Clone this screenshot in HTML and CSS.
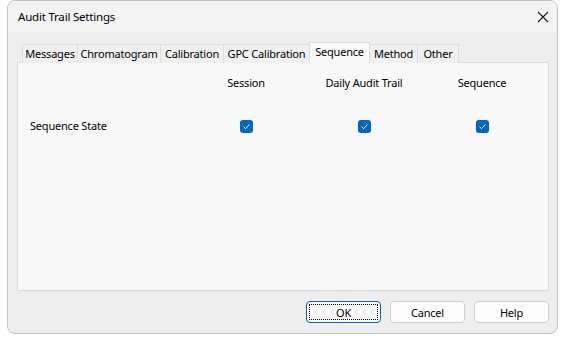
FILE: index.html
```html
<!DOCTYPE html>
<html>
<head>
<meta charset="utf-8">
<link rel="stylesheet" href="styles.css">
</head>
<body>
<div class="window">
  <div class="titlebar">
    <span class="title">Audit Trail Settings</span>
    <svg class="close" width="12" height="12" viewBox="0 0 12 12"><path d="M1 1 L11 11 M11 1 L1 11" stroke="#1a1a1a" stroke-width="1.1" fill="none"/></svg>
  </div>
  <div class="content">
    <div class="tabs">
      <div class="tab w-messages">Messages</div>
      <div class="tab w-chrom">Chromatogram</div>
      <div class="tab w-cal">Calibration</div>
      <div class="tab w-gpc">GPC Calibration</div>
      <div class="tab active w-seq">Sequence</div>
      <div class="tab w-method">Method</div>
      <div class="tab w-other">Other</div>
    </div>
    <div class="panel">
      <div class="grid">
        <div></div>
        <div class="head">Session</div>
        <div class="head">Daily Audit Trail</div>
        <div class="head">Sequence</div>
        <div class="label">Sequence State</div>
        <div class="cell"><span class="check"><svg width="13" height="13" viewBox="0 0 13 13"><path d="M3.6 6.8 L5.6 8.6 L9.4 4.6" stroke="#ffffff" stroke-width="1" fill="none"/></svg></span></div>
        <div class="cell"><span class="check"><svg width="13" height="13" viewBox="0 0 13 13"><path d="M3.6 6.8 L5.6 8.6 L9.4 4.6" stroke="#ffffff" stroke-width="1" fill="none"/></svg></span></div>
        <div class="cell"><span class="check"><svg width="13" height="13" viewBox="0 0 13 13"><path d="M3.6 6.8 L5.6 8.6 L9.4 4.6" stroke="#ffffff" stroke-width="1" fill="none"/></svg></span></div>
      </div>
    </div>
    <div class="buttons">
      <button class="btn default"><span class="focus">OK</span></button>
      <button class="btn">Cancel</button>
      <button class="btn">Help</button>
    </div>
  </div>
</div>
</body>
</html>
```
FILE: styles.css
```css
* { box-sizing: border-box; }
html, body { margin: 0; padding: 0; background: #ffffff; }
body {
  font-family: "Noto Sans", "Open Sans", sans-serif;
  font-size: 11px;
  color: #000;
  width: 567px;
  height: 341px;
  overflow: hidden;
}
.window {
  margin-left: 7px;
  width: 551px;
  height: 334px;
  border: 1px solid #c4c4c4;
  border-radius: 8px;
  background: #eeeeee;
  overflow: hidden;
  display: flex;
  flex-direction: column;
}
.titlebar {
  height: 31px;
  flex: none;
  background: #f3f3f3;
  display: flex;
  align-items: center;
  justify-content: space-between;
  padding: 0 8px 0 10px;
}
.title { font-size: 11.5px; letter-spacing: -0.2px; }
.close { display: block; }
.content {
  padding: 10px 9px 0 9px;
  display: flex;
  flex-direction: column;
}
.tabs {
  display: flex;
  align-items: flex-end;
  padding-left: 5px;
  height: 21px;
  position: relative;
  z-index: 1;
  margin-bottom: -1px;
}
.tab {
  height: 19px;
  border: 1px solid #dcdcdc;
  border-bottom: none;
  border-right: none;
  background: #f0f0f0;
  text-align: center;
  line-height: 17px;
  letter-spacing: -0.2px;
  white-space: nowrap;
}
.tab.w-other { border-right: 1px solid #dcdcdc; }
.tab.active {
  height: 22px;
  background: #f9f9f9;
  border: 1px solid #dcdcdc;
  border-bottom: none;
  line-height: 17px;
  margin-bottom: -1px;
}
.tab.active + .tab { border-left: none; }
.w-messages { width: 55px; }
.w-chrom { width: 83px; }
.w-cal { width: 63px; }
.w-gpc { width: 86px; }
.w-seq { width: 61px; }
.w-method { width: 47px; }
.w-other { width: 42px; }
.panel {
  width: 532px;
  height: 229px;
  border: 1px solid #dcdcdc;
  background: #f9f9f9;
}
.grid {
  display: grid;
  grid-template-columns: 157px 118px 118px 118px;
  grid-template-rows: 40px 48px;
  padding-left: 12px;
  padding-top: 12px;
}
.head {
  text-align: center;
  letter-spacing: -0.2px;
}
.label {
  letter-spacing: -0.2px;
  align-self: start;
  padding-top: 3px;
}
.cell {
  display: flex;
  justify-content: center;
  align-items: flex-start;
  padding-top: 5px;
}
.check {
  width: 13px;
  height: 13px;
  background: #0067c0;
  border-radius: 3px;
  display: block;
}
.check svg { display: block; }
.buttons {
  display: flex;
  justify-content: flex-end;
  gap: 9px;
  margin-top: 10px;
  width: 532px;
}
.btn {
  width: 75px;
  height: 22px;
  border: 1px solid #d0d0d0;
  border-radius: 4px;
  background: #fdfdfd;
  font-family: "Noto Sans", "Open Sans", sans-serif;
  font-size: 11px;
  letter-spacing: -0.2px;
  color: #000;
  padding: 0;
  display: flex;
  align-items: center;
  justify-content: center;
}
.btn.default {
  border: 1px solid #0067c0;
  padding: 2px;
}
.focus {
  display: flex;
  align-items: center;
  justify-content: center;
  width: 100%;
  height: 100%;
  border: 1px dotted #000;
}
```
